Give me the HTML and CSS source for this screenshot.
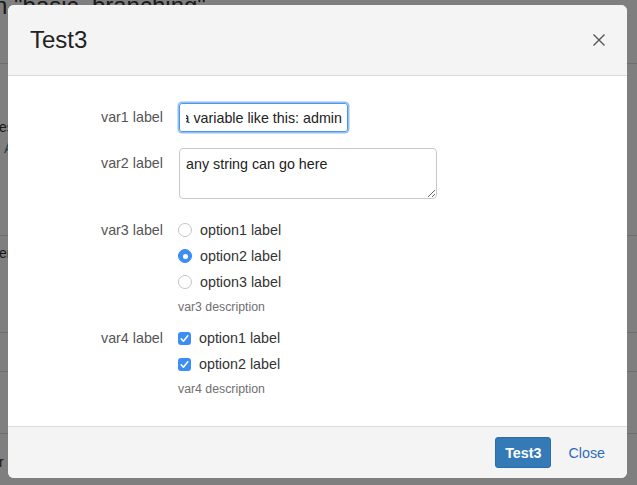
FILE: index.html
```html
<!DOCTYPE html>
<html>
<head>
<meta charset="utf-8">
<link rel="stylesheet" href="styles.css">
</head>
<body>
<div class="page">
  <div class="bg-title">n "basic_branching"</div>
  <div class="bg-row bg-row-1">
    <div class="bg-text">es</div>
    <div class="bg-link">A</div>
  </div>
  <div class="bg-row bg-row-2"><div class="bg-text">er</div></div>
  <div class="bg-row bg-row-3"></div>
  <div class="bg-row bg-row-4"></div>
  <div class="bg-row bg-row-5"><div class="bg-text">r</div></div>
</div>
<div class="backdrop"></div>
<div class="modal">
  <div class="modal-header">
    <h4 class="modal-title">Test3</h4>
    <button class="modal-close" type="button" aria-label="Close">
      <svg width="12" height="12" viewBox="0 0 12 12"><path d="M0.5 0.5 L11.5 11.5 M11.5 0.5 L0.5 11.5" stroke="#555" stroke-width="1.4" fill="none"/></svg>
    </button>
  </div>
  <div class="modal-body">
    <div class="field field-1">
      <div class="field-label">var1 label</div>
      <div class="text-input"><div class="text-input-value"><span>a variable like this: admin</span></div></div>
    </div>
    <div class="field field-2">
      <div class="field-label label-top">var2 label</div>
      <textarea class="text-area">any string can go here</textarea>
    </div>
    <div class="field field-3">
      <div class="field-label label-opt">var3 label</div>
      <div class="options">
        <div class="option"><span class="radio"></span>option1 label</div>
        <div class="option"><span class="radio checked"></span>option2 label</div>
        <div class="option"><span class="radio"></span>option3 label</div>
        <div class="desc">var3 description</div>
      </div>
    </div>
    <div class="field field-4">
      <div class="field-label label-opt">var4 label</div>
      <div class="options">
        <div class="option"><span class="check"><svg width="13" height="13" viewBox="0 0 13 13"><path d="M3.2 6.8 L5.4 9.2 L9.8 3.8" stroke="#fff" stroke-width="1.6" fill="none" stroke-linecap="round" stroke-linejoin="round"/></svg></span>option1 label</div>
        <div class="option"><span class="check"><svg width="13" height="13" viewBox="0 0 13 13"><path d="M3.2 6.8 L5.4 9.2 L9.8 3.8" stroke="#fff" stroke-width="1.6" fill="none" stroke-linecap="round" stroke-linejoin="round"/></svg></span>option2 label</div>
        <div class="desc">var4 description</div>
      </div>
    </div>
  </div>
  <div class="modal-footer">
    <button class="btn-primary" type="button">Test3</button>
    <button class="btn-link" type="button">Close</button>
  </div>
</div>
</body>
</html>
```
FILE: styles.css
```css
html, body {
  margin: 0;
  padding: 0;
  height: 100%;
  overflow: hidden;
}
body {
  font-family: "Liberation Sans", Arial, sans-serif;
  background: #ffffff;
  color: #333;
}
.page {
  height: 485px;
  overflow: hidden;
}
.bg-title {
  font-size: 24px;
  line-height: 24px;
  margin-top: -6px;
  padding-bottom: 6px;
  box-sizing: border-box;
  height: 70px;
  text-indent: -6px;
  color: #333;
  border-bottom: 1px solid #ddd;
  white-space: nowrap;
}
.bg-row {
  border-bottom: 1px solid #ddd;
  box-sizing: border-box;
  font-size: 14px;
  color: #333;
}
.bg-row-1 { height: 172px; padding-top: 54px; }
.bg-row-2 { height: 97px; padding-top: 8px; }
.bg-row-3 { height: 39px; }
.bg-row-4 { height: 62px; }
.bg-row-5 { height: 60px; padding-top: 19px; }
.bg-text {
  line-height: 18px;
  text-indent: -1px;
}
.bg-link {
  line-height: 18px;
  margin-top: 3px;
  color: #337ab7;
  text-indent: 4px;
}
.backdrop {
  position: absolute;
  inset: 0;
  background: rgba(0, 0, 0, 0.5);
}
.modal {
  position: absolute;
  left: 8px;
  top: 5px;
  width: 619px;
  height: 473px;
  background: #fff;
  border-radius: 6px;
  overflow: hidden;
  display: flex;
  flex-direction: column;
}
.modal-header {
  height: 71px;
  box-sizing: border-box;
  flex: none;
  display: flex;
  align-items: center;
  justify-content: space-between;
  padding: 0 22px;
  background: #f4f4f4;
  border-bottom: 1px solid #dadada;
}
.modal-title {
  margin: 0;
  font-size: 24px;
  font-weight: normal;
  color: #222;
  line-height: 30px;
}
.modal-close {
  border: 0;
  background: none;
  padding: 0;
  width: 12px;
  height: 12px;
  display: flex;
}
.modal-body {
  flex: 1;
  padding-top: 26px;
  font-size: 14.3px;
}
.field {
  display: flex;
  gap: 15px;
}
.field-1 { align-items: center; margin-bottom: 15px; }
.field-2 { margin-bottom: 18px; }
.field-3 { margin-bottom: 9px; }
.field-label {
  width: 155px;
  flex: none;
  text-align: right;
  color: #555;
  line-height: 31px;
}
.label-top {
  line-height: 18px;
  padding-top: 6px;
}
.label-opt {
  line-height: 26px;
}
.text-input {
  width: 169px;
  height: 29px;
  box-sizing: border-box;
  margin: 1px 0 1px 1px;
  border: 1px solid #4f97ea;
  border-radius: 3px;
  box-shadow: 0 0 0 1.5px rgba(110, 168, 238, 0.75);
  display: flex;
  align-items: center;
  padding: 0 5px 0 6px;
  color: #222;
}
.text-input-value {
  flex: 1;
  min-width: 0;
  display: flex;
  justify-content: flex-end;
  overflow: hidden;
  white-space: nowrap;
}
.text-input-value span {
  flex: none;
}
.text-area {
  width: 258px;
  height: 51px;
  box-sizing: border-box;
  margin: 0 0 0 1px;
  padding: 6px 6px;
  border: 1px solid #c9c9c9;
  border-radius: 4px;
  font-family: "Liberation Sans", Arial, sans-serif;
  font-size: 14.3px;
  line-height: 18px;
  color: #222;
  resize: both;
}
.options {
  display: flex;
  flex-direction: column;
}
.option {
  height: 26px;
  display: flex;
  align-items: center;
  gap: 8px;
  color: #333;
}
.radio {
  width: 14px;
  height: 14px;
  box-sizing: border-box;
  border: 1px solid #c6c6c6;
  border-radius: 50%;
  background: #fff;
  flex: none;
  display: flex;
  align-items: center;
  justify-content: center;
}
.radio.checked {
  background: #3b8ef5;
  border-color: #3689f0;
}
.radio.checked::after {
  content: "";
  width: 5px;
  height: 5px;
  border-radius: 50%;
  background: #fff;
}
.check {
  width: 13px;
  height: 13px;
  border-radius: 3px;
  background: #3b8ef5;
  flex: none;
  display: flex;
}
.desc {
  font-size: 12.3px;
  line-height: 18px;
  margin-top: 3px;
  color: #707070;
}
.modal-footer {
  flex: none;
  height: 52px;
  box-sizing: border-box;
  border-top: 1px solid #dcdcdc;
  background: #f4f4f4;
  padding: 10px;
  display: flex;
  justify-content: flex-end;
  gap: 5px;
}
.btn-primary {
  height: 31px;
  padding: 0 9px;
  border: 1px solid #2e6da4;
  border-radius: 3px;
  background: #337ab7;
  color: #fff;
  font-family: "Liberation Sans", Arial, sans-serif;
  font-weight: bold;
  font-size: 14.3px;
}
.btn-link {
  height: 31px;
  padding: 0 12px;
  border: 0;
  background: none;
  color: #2f6db4;
  font-family: "Liberation Sans", Arial, sans-serif;
  font-size: 14.3px;
}
```
